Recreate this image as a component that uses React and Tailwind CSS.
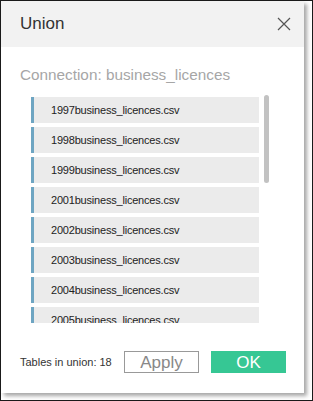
const files = [
  "1997business_licences.csv",
  "1998business_licences.csv",
  "1999business_licences.csv",
  "2001business_licences.csv",
  "2002business_licences.csv",
  "2003business_licences.csv",
  "2004business_licences.csv",
  "2005business_licences.csv",
  "2006business_licences.csv",
];

export default function App() {
  return (
    <div
      className="w-[313px] h-[401px] bg-white border border-[#1a1a1a] overflow-hidden"
      style={{ fontFamily: '"Liberation Sans", Arial, sans-serif' }}
    >
      <div className="w-[303px] h-[392px] bg-white flex flex-col shadow-[3px_3px_4px_rgba(0,0,0,0.35)]">
        {/* header */}
        <div className="h-[46px] bg-[#f2f2f2] flex items-center justify-between pl-[19px] pr-[13px]">
          <span className="text-[17px] text-[#333]">Union</span>
          <svg width="14" height="14" viewBox="0 0 14 14" className="text-[#555]">
            <path d="M1 1L13 13M13 1L1 13" stroke="currentColor" strokeWidth="1.2" fill="none" />
          </svg>
        </div>

        <div className="pl-[19px] pt-[19px] text-[15.3px] text-[#a6a6a6] leading-[18px]">
          Connection: business_licences
        </div>

        <div className="flex mt-[13px] pl-[30px]">
          <div className="w-[228px] h-[226px] overflow-hidden flex flex-col gap-[4px]">
            {files.map((f) => (
              <div
                key={f}
                className="h-[26px] shrink-0 bg-[#ebebeb] border-l-[3px] border-[#6ea5c2] flex items-center pl-[17px] text-[11px] tracking-[-0.2px] text-[#222]"
              >
                {f}
              </div>
            ))}
          </div>
          <div className="ml-[5px] -mt-[2px] w-[5px] h-[88px] rounded-full bg-[#c2c2c2]" />
        </div>

        {/* footer */}
        <div className="flex items-center mt-[28px] pl-[19px]">
          <span className="text-[11px] text-[#333] w-[104px]">Tables in union: 18</span>
          <button className="w-[75px] h-[22px] border border-[#999] text-[17px] text-[#888] flex items-center justify-center leading-none">
            Apply
          </button>
          <button className="ml-[12px] w-[75px] h-[22px] bg-[#36c794] text-[17px] text-white flex items-center justify-center leading-none">
            OK
          </button>
        </div>
      </div>
    </div>
  );
}
